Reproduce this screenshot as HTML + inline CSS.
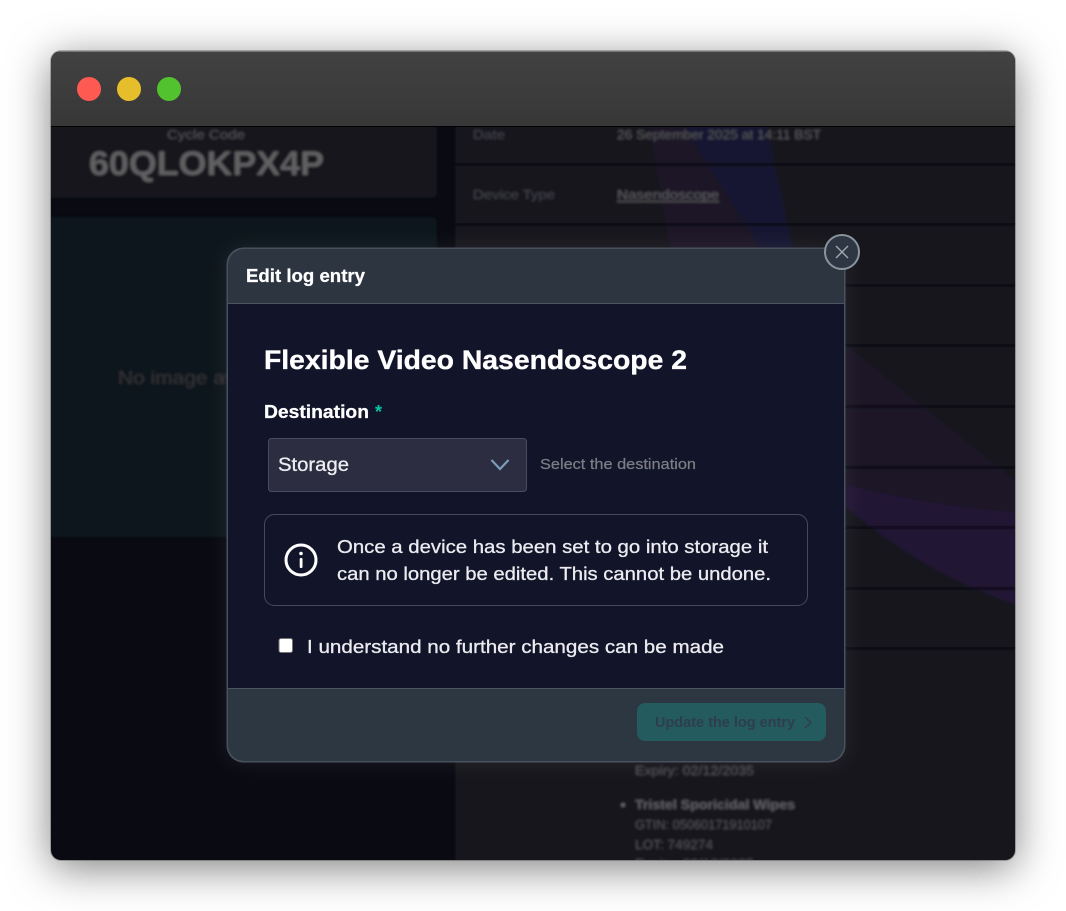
<!DOCTYPE html>
<html lang="en">
<head>
<meta charset="utf-8">
<title>Edit log entry</title>
<style>
html,body{margin:0;padding:0;background:#fff;width:1066px;height:911px;overflow:hidden}
#win{position:absolute;left:51px;top:51px;width:964px;height:809px;border-radius:10px;box-shadow:0 8px 42px rgba(0,0,0,.5),0 0 0 1px rgba(120,120,120,.45);}
svg{position:absolute;left:0;top:0;display:block}
text{font-family:"Liberation Sans",sans-serif}
</style>
</head>
<body>
<div id="win"></div>
<svg width="1066" height="911" viewBox="0 0 1066 911" xmlns="http://www.w3.org/2000/svg">
<defs>
<clipPath id="w"><rect x="51" y="51" width="964" height="809" rx="10"/></clipPath>
<clipPath id="b"><rect x="51" y="127" width="964" height="733"/></clipPath>
<linearGradient id="tb" x1="0" y1="0" x2="0" y2="1"><stop offset="0" stop-color="#424242"/><stop offset="1" stop-color="#373737"/></linearGradient>
<filter id="blur" x="-5%" y="-5%" width="110%" height="110%"><feGaussianBlur stdDeviation="1.4"/></filter>
<filter id="blur2" x="-30%" y="-30%" width="160%" height="160%"><feGaussianBlur stdDeviation="9"/></filter>
<clipPath id="m"><rect x="228" y="249" width="616" height="512" rx="16"/></clipPath>
</defs>
<g clip-path="url(#w)">
<rect x="51" y="51" width="964" height="809" fill="#090a12"/>
<g clip-path="url(#b)">
<g filter="url(#blur)">
<rect x="455" y="120" width="570" height="750" fill="#14151d"/>
<path d="M846 345L1020 484V520L846 480Z" fill="#1a1427"/>
<path d="M846 345Q930 430 1020 484V516Q930 512 846 485Z" fill="#1a1427"/>
<path d="M846 485Q930 506 1020 513V606Q925 575 846 507Z" fill="#221935"/>
<path d="M680 120H765L793 248H760Z" fill="#121730"/>
<path d="M648 120H680L760 248H670Z" fill="#1b1426"/>
<g fill="#0a0a12">
<rect x="455" y="163" width="570" height="3"/><rect x="455" y="223" width="570" height="3"/><rect x="455" y="284" width="570" height="3"/><rect x="455" y="344" width="570" height="3"/><rect x="455" y="405" width="570" height="3"/><rect x="455" y="466" width="570" height="3"/><rect x="455" y="526" width="570" height="3"/><rect x="455" y="587" width="570" height="3"/><rect x="455" y="647" width="570" height="3"/>
</g>
<rect x="45" y="110" width="392" height="88" rx="5" fill="#13141c"/>
<rect x="45" y="217" width="392" height="320" rx="5" fill="#11121a"/>
<g fill="#505055">
<text x="167" y="139" font-size="13" textLength="78" lengthAdjust="spacingAndGlyphs">Cycle Code</text>
<text x="89" y="175" font-size="34" font-weight="700" fill="#606062" textLength="235" lengthAdjust="spacingAndGlyphs">60QLOKPX4P</text>
<text x="473" y="139" font-size="13" fill="#434349" textLength="32" lengthAdjust="spacingAndGlyphs">Date</text>
<text x="617" y="139" font-size="13" fill="#56565a" textLength="204" lengthAdjust="spacingAndGlyphs">26 September 2025 at 14:11 BST</text>
<text x="473" y="199" font-size="13" fill="#434349" textLength="82" lengthAdjust="spacingAndGlyphs">Device Type</text>
<text x="617" y="199" font-size="13" fill="#5e5e62" textLength="102" lengthAdjust="spacingAndGlyphs">Nasendoscope</text>
<rect x="617" y="201" width="102" height="1" fill="#5e5e62"/>
<text x="118" y="384" font-size="18" fill="#343439" textLength="178" lengthAdjust="spacingAndGlyphs">No image available</text>
<text x="635" y="775" font-size="13" textLength="119" lengthAdjust="spacingAndGlyphs">Expiry: 02/12/2035</text>
<circle cx="623" cy="805" r="2" fill="#66666c"/>
<text x="635" y="809" font-size="13" font-weight="700" fill="#5e5e64" textLength="160" lengthAdjust="spacingAndGlyphs">Tristel Sporicidal Wipes</text>
<text x="635" y="829" font-size="13" textLength="137" lengthAdjust="spacingAndGlyphs">GTIN: 05060171910107</text>
<text x="635" y="849" font-size="13" textLength="78" lengthAdjust="spacingAndGlyphs">LOT: 749274</text>
<text x="635" y="868" font-size="13" textLength="119" lengthAdjust="spacingAndGlyphs">Expiry: 02/12/2025</text>
</g>
</g>
<rect x="224" y="245" width="624" height="520" rx="20" fill="#fff" opacity=".06" filter="url(#blur2)"/>
</g>
<!-- title bar -->
<rect x="51" y="51" width="964" height="75" fill="url(#tb)"/>
<rect x="51" y="126" width="964" height="1" fill="#000"/>
<rect x="51" y="51" width="964" height="1" fill="#7a7a7a"/>
<circle cx="89" cy="89" r="12" fill="#ff5a52"/>
<circle cx="129" cy="89" r="12" fill="#e6bd2a"/>
<circle cx="169" cy="89" r="12" fill="#52c22f"/>
</g>
<!-- modal -->
<rect x="226.5" y="247.5" width="619" height="515" rx="17" fill="#48525f"/>
<g clip-path="url(#m)">
<rect x="228" y="249" width="616" height="54" fill="#2d3541"/>
<rect x="228" y="303" width="616" height="1" fill="#4a5562"/>
<rect x="228" y="304" width="616" height="384" fill="#12142a"/>
<rect x="228" y="688" width="616" height="1" fill="#4a5562"/>
<rect x="228" y="689" width="616" height="73" fill="#2d3742"/>
</g>
<text x="246" y="282" font-size="18.5" font-weight="700" fill="#fff" stroke="#fff" stroke-width=".25" textLength="119" lengthAdjust="spacingAndGlyphs">Edit log entry</text>
<text x="264" y="369" font-size="27" font-weight="700" fill="#fff" stroke="#fff" stroke-width=".35" textLength="423" lengthAdjust="spacingAndGlyphs">Flexible Video Nasendoscope 2</text>
<text x="264" y="418" font-size="18" font-weight="700" fill="#fff" stroke="#fff" stroke-width=".25" textLength="105" lengthAdjust="spacingAndGlyphs">Destination</text>
<text x="375" y="418" font-size="18" font-weight="700" fill="#00c9a7">*</text>
<rect x="268.5" y="438.5" width="258" height="53" rx="3" fill="#2c2d41" stroke="#4a4c5e"/>
<text x="278" y="471" font-size="19" fill="#eeeef2" stroke="#eeeef2" stroke-width=".3" textLength="71" lengthAdjust="spacingAndGlyphs">Storage</text>
<path d="M491.5 460L500 469L508.5 460" fill="none" stroke="#7b9cb8" stroke-width="2.2"/>
<text x="540" y="469" font-size="14.5" fill="#7c7c84" stroke="#7c7c84" stroke-width=".25" textLength="156" lengthAdjust="spacingAndGlyphs">Select the destination</text>
<rect x="264.5" y="514.5" width="543" height="91" rx="10" fill="none" stroke="#484a5c"/>
<circle cx="301" cy="560" r="15" fill="none" stroke="#fff" stroke-width="3"/>
<rect x="299.7" y="558" width="2.8" height="10" rx="1" fill="#fff"/>
<circle cx="301" cy="553.5" r="1.8" fill="#fff"/>
<text x="337" y="553" font-size="18.5" fill="#ebebf0" stroke="#ebebf0" stroke-width=".3" textLength="431" lengthAdjust="spacingAndGlyphs">Once a device has been set to go into storage it</text>
<text x="337" y="580" font-size="18.5" fill="#ebebf0" stroke="#ebebf0" stroke-width=".3" textLength="434" lengthAdjust="spacingAndGlyphs">can no longer be edited. This cannot be undone.</text>
<rect x="279" y="638.5" width="13.5" height="14" rx="2" fill="#fff" stroke="#767676"/>
<text x="307" y="653" font-size="18.5" fill="#ebebf0" stroke="#ebebf0" stroke-width=".3" textLength="417" lengthAdjust="spacingAndGlyphs">I understand no further changes can be made</text>
<rect x="637" y="703" width="189" height="38" rx="8" fill="#235b5f"/>
<text x="655" y="727" font-size="14.5" font-weight="700" fill="#2f3d50" textLength="140" lengthAdjust="spacingAndGlyphs">Update the log entry</text>
<path d="M805 717L811 722.5L805 728" fill="none" stroke="#2f3d50" stroke-width="1.4"/>
<circle cx="842" cy="252" r="17" fill="#2d3642" stroke="#8a949c" stroke-width="2"/>
<path d="M836 246L848 258M848 246L836 258" fill="none" stroke="#a0a8b0" stroke-width="1.4"/>
</svg>
</body>
</html>
